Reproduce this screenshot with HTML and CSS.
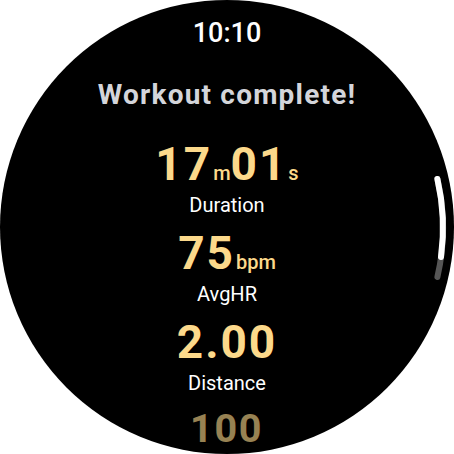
FILE: index.html
```html
<!DOCTYPE html>
<html>
<head>
<meta charset="utf-8">
<link rel="stylesheet" href="styles.css">
</head>
<body>
<div class="watch">
  <div class="screen">
    <div class="time">10:10</div>
    <div class="title">Workout complete!</div>
    <div class="stats">
      <div class="stat">
        <div class="value">17<span class="unit">m</span>01<span class="unit">s</span></div>
        <div class="label">Duration</div>
      </div>
      <div class="stat">
        <div class="value">75<span class="unit">bpm</span></div>
        <div class="label">AvgHR</div>
      </div>
      <div class="stat">
        <div class="value">2.00</div>
        <div class="label">Distance</div>
      </div>
      <div class="stat stat-fade">
        <div class="value">100</div>
        <div class="label">kCal</div>
      </div>
    </div>
  </div>
  <svg class="scrollbar" width="454" height="454" viewBox="0 0 454 454">
    <path d="M437.4 179 A216 216 0 0 1 437.4 277" fill="none" stroke="#565656" stroke-width="6" stroke-linecap="round"/>
    <path d="M437.4 179 A216 216 0 0 1 441.0 257" fill="none" stroke="#ffffff" stroke-width="6" stroke-linecap="round"/>
  </svg>
</div>
</body>
</html>
```

FILE: styles.css
```css
html, body {
  margin: 0;
  padding: 0;
  background: #ffffff;
}

.watch {
  position: relative;
  width: 454px;
  height: 454px;
}

.screen {
  width: 454px;
  height: 454px;
  border-radius: 50%;
  background: #000000;
  overflow: hidden;
  display: flex;
  flex-direction: column;
  align-items: center;
  padding-top: 17px;
  box-sizing: border-box;
  font-family: Roboto, "Noto Sans", sans-serif;
}

.time {
  color: #ffffff;
  font-size: 27px;
  font-weight: 500;
  line-height: 32px;
  margin-bottom: 31px;
}

.title {
  color: #d4d5da;
  font-size: 28px;
  font-weight: 700;
  letter-spacing: 1.2px;
  line-height: 30px;
  margin-bottom: 31px;
}

.stats {
  display: flex;
  flex-direction: column;
  align-items: center;
  gap: 13px;
}

.stat {
  display: flex;
  flex-direction: column;
  align-items: center;
}

.value {
  color: #fcd98b;
  font-size: 46px;
  font-weight: 700;
  line-height: 46px;
  letter-spacing: 2px;
  margin-bottom: 6px;
}

.unit {
  font-size: 20px;
  font-weight: 500;
  line-height: 0;
  letter-spacing: 0;
  margin: 0 0 0 1px;
}

.label {
  color: #ffffff;
  font-size: 20px;
  line-height: 24px;
}

.stat-fade {
  opacity: 0.6;
  transform: scale(0.86);
  transform-origin: 50% 0;
}

.scrollbar {
  position: absolute;
  left: 0;
  top: 0;
}
```
